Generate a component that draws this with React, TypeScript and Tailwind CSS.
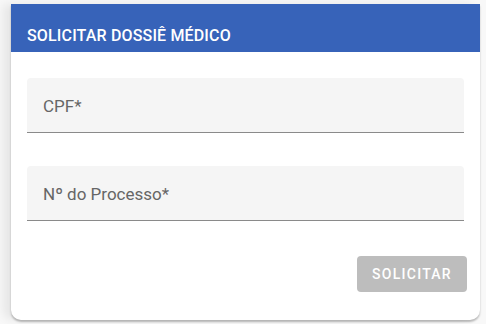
export default function App() {
  return (
    <div
      className="w-[486px] h-[324px] overflow-hidden bg-[#f8f8f8] pt-[4px] pl-[11px]"
      style={{ fontFamily: 'Roboto, "Liberation Sans", sans-serif' }}
    >
      <div className="w-[469px] h-[316px] bg-white rounded-b-[10px] shadow-[-8px_0_10px_rgba(0,0,0,0.07),0_2px_2px_rgba(0,0,0,0.25)] flex flex-col">
        <div className="h-[48px] bg-[#3763b9] flex items-end pb-[8px] px-[16px]">
          <h1 className="text-white text-[16px] font-medium tracking-[0.01em] uppercase leading-none">
            Solicitar Dossiê Médico
          </h1>
        </div>
        <div className="flex flex-col px-[16px] pt-[26px]">
          <div className="h-[55px] bg-[#f5f5f5] rounded-t-[4px] border-b border-[#8a8a8a] flex items-center px-[16px] pt-[4px]">
            <span className="text-[17px] text-[#666666]">CPF*</span>
          </div>
          <div className="mt-[33px] h-[55px] bg-[#f5f5f5] rounded-t-[4px] border-b border-[#8a8a8a] flex items-center px-[16px] pt-[4px]">
            <span className="text-[17px] text-[#666666]">Nº do Processo*</span>
          </div>
          <div className="flex justify-end mt-[35px]">
            <button className="w-[110px] h-[36px] -mr-[3px] rounded-[4px] bg-[#bdbdbd] text-white text-[14px] font-medium tracking-[0.09em] uppercase">
              Solicitar
            </button>
          </div>
        </div>
      </div>
    </div>
  )
}
